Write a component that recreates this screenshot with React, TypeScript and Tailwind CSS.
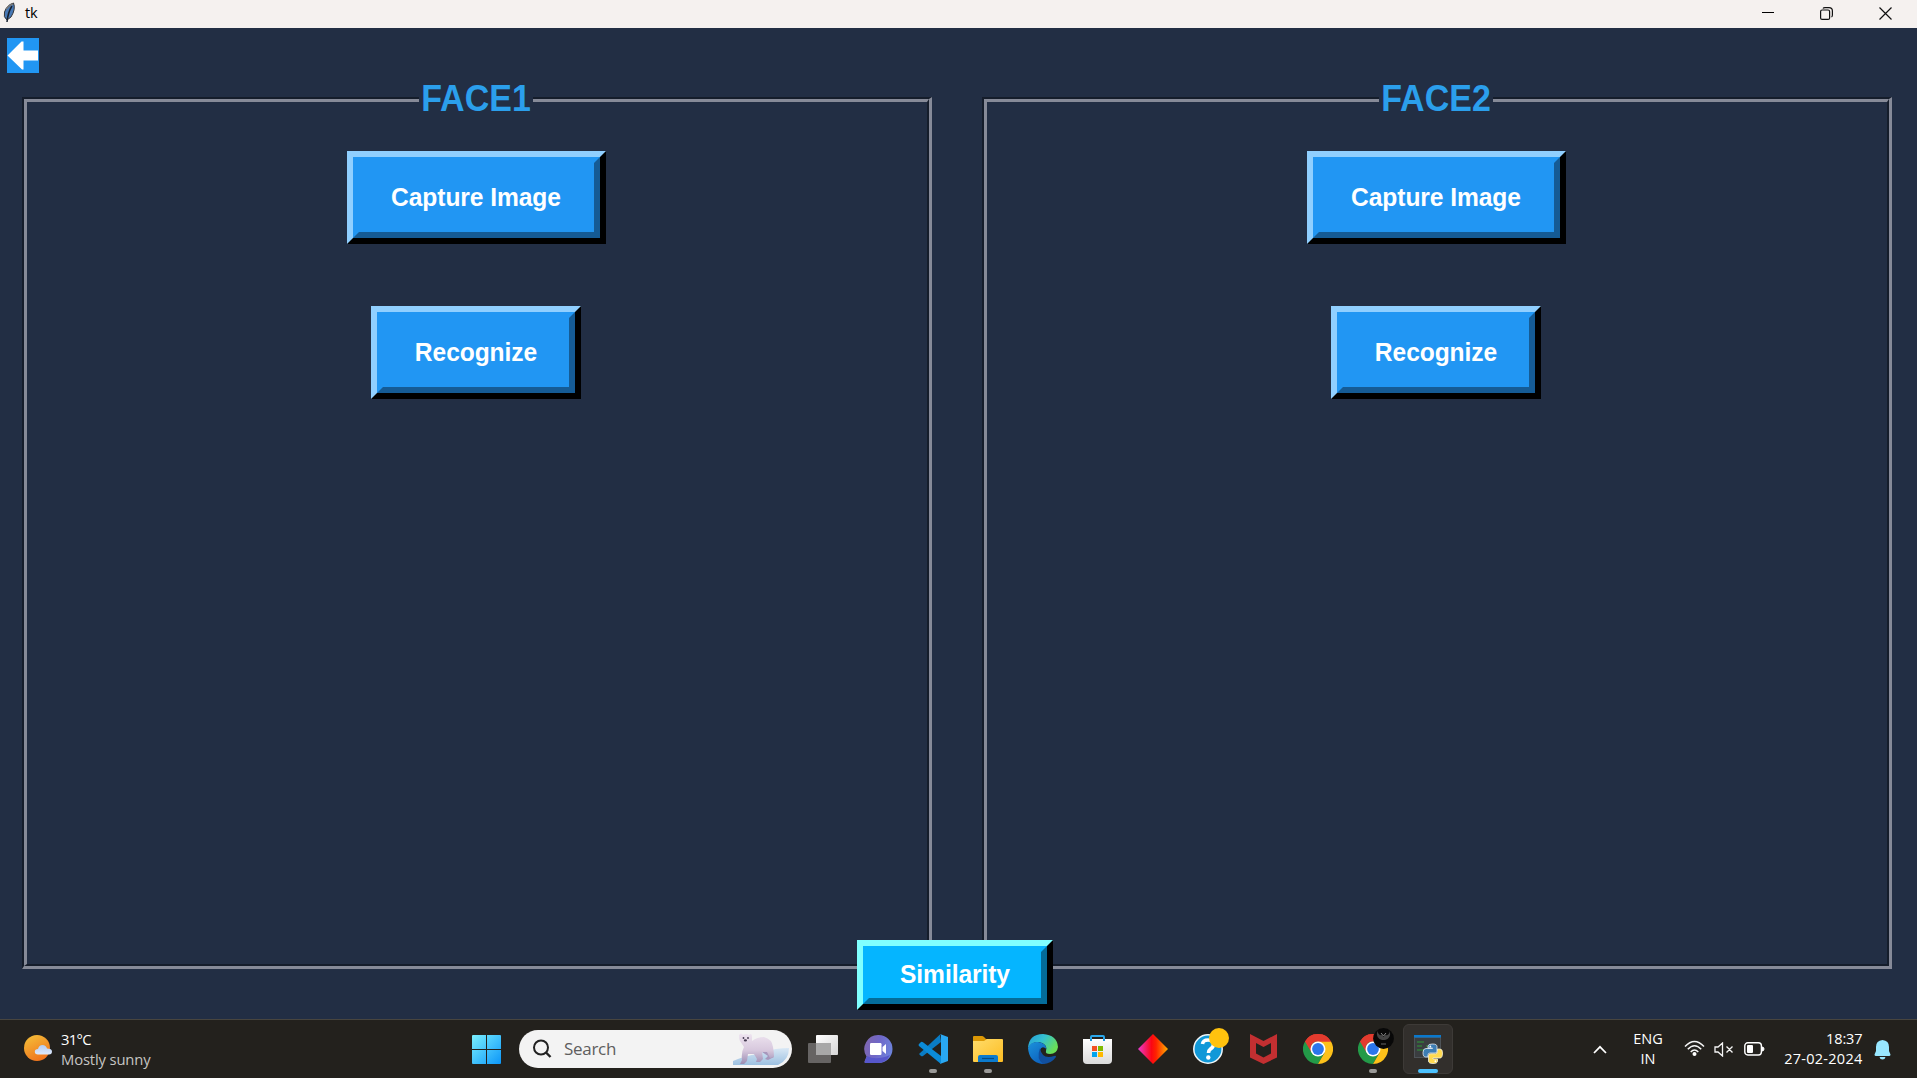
import React from "react";

const labelFont = "font-['Liberation_Sans',Arial,sans-serif]";

function TkButton({ label, className, cyan = false }: { label: string; className: string; cyan?: boolean }) {
  const outer = cyan ? "border-t-[#80ffff] border-l-[#80ffff]" : "border-t-[#90cfff] border-l-[#90cfff]";
  const inner = cyan
    ? "bg-[#05b5ff] border-t-[#05b5ff] border-l-[#05b5ff] border-r-[#046c99] border-b-[#046c99]"
    : "bg-[#2196f3] border-t-[#2196f3] border-l-[#2196f3] border-r-[#155b95] border-b-[#155b95]";
  return (
    <button className={`block border-6 border-r-black border-b-black ${outer} ${className}`}>
      <span className={`flex h-full w-full items-center justify-center whitespace-nowrap border-6 text-[24.6px] leading-7 font-bold text-white ${inner}`}>
        <span className="scale-y-106 tracking-[-0.08px]">{label}</span>
      </span>
    </button>
  );
}

function FacePanel({ title }: { title: string }) {
  return (
    <section className="relative h-[872px] w-[910px] border-t-2 border-r-3 border-b-3 border-l-2 border-t-[#151d2b] border-r-[#868a98] border-b-[#868a98] border-l-[#151d2b]">
      <div className="flex h-full flex-col items-center border-t-3 border-r-2 border-b-2 border-l-3 border-t-[#868a98] border-r-[#151d2b] border-b-[#151d2b] border-l-[#868a98] pr-[2px]">
        <TkButton label="Capture Image" className="mt-[49px] h-[93px] w-[259px]" />
        <TkButton label="Recognize" className="mt-[62px] h-[93px] w-[210px]" />
      </div>
      <h2 className="absolute -top-[19px] left-[395px] flex h-9 w-[114px] items-center justify-center bg-[#222e44] text-[34px] leading-9 font-bold text-[#2b9fec]">
        <span className="scale-y-106">{title}</span>
      </h2>
    </section>
  );
}

function TaskItem({ children, running = false, active = false }: { children: React.ReactNode; running?: boolean; active?: boolean }) {
  return (
    <div className="relative flex h-[58px] w-[55px] shrink-0 items-center justify-center">
      {active && <div className="absolute top-1 left-[2.5px] h-[50px] w-[50px] rounded-md border border-[#3d3a37] bg-[#322f2c]" />}
      <div className="relative">{children}</div>
      {running && <div className="absolute top-[49px] left-[23.5px] h-1 w-2 rounded-full bg-[#9b9a98]" />}
      {active && <div className="absolute top-[49px] left-[17.5px] h-1 w-5 rounded-full bg-[#4cc2ff]" />}
    </div>
  );
}

function Chrome() {
  return (
    <svg width="30" height="30" viewBox="0 0 30 30">
      <path d="M15 15 L2 7.5 A15 15 0 0 1 28 7.5 Z" fill="#e33b2e" />
      <path d="M2 7.5 A15 15 0 0 0 15 30 L21.5 18.7 L15 15 Z" fill="#239a48" />
      <path d="M28 7.5 H15 L21.5 18.8 L15 30 A15 15 0 0 0 28 7.5Z" fill="#fdc11a" />
      <path d="M2 7.5 L8.5 18.7 L15 15 L15 7.5Z" fill="#239a48" />
      <path d="M2 7.5 A15 15 0 0 1 28 7.5 H15 A7.5 7.5 0 0 0 8 12.5 L8.2 18Z" fill="#e33b2e" />
      <circle cx="15" cy="15" r="7.5" fill="#fff" />
      <circle cx="15" cy="15" r="5.9" fill="#2b76ec" />
    </svg>
  );
}

function Bear() {
  return (
    <svg width="58" height="34" viewBox="0 0 58 34">
      <defs>
        <linearGradient id="ice" x1="0" y1="0" x2="0" y2="1"><stop stopColor="#d9e8f5" /><stop offset="1" stopColor="#9dc0e0" /></linearGradient>
        <linearGradient id="fur" x1="0" y1="0" x2="0" y2="1"><stop stopColor="#eee4f0" /><stop offset=".55" stopColor="#d7c8dd" /><stop offset="1" stopColor="#9b8cb2" /></linearGradient>
      </defs>
      <path d="M1 29 Q12 24 25 22 Q42 16 57 16 Q57 28 46 33 H1Z" fill="url(#ice)" />
      <path d="M30 20 L39 19 L42 25 L36 28 L33 27 L36 24Z" fill="#a797bc" />
      <path d="M7 3 Q9 0 11 3 Q14 1 17 3 Q20 0 20 5 Q20 8 20 9 Q25 5 32 5 Q40 7 41 15 Q42 20 42 25 L38 26 L35 20 L30 20 L31 27 L28 30 H24 L25 27 L22 22 H16 L15 29 L12 32 H8 L10 28 Q9 20 12 15 L8 9 Q7 7 7 3Z" fill="url(#fur)" />
      <circle cx="11.5" cy="6" r=".9" fill="#443a50" /><circle cx="16" cy="6" r=".9" fill="#443a50" />
      <ellipse cx="13.4" cy="8.4" rx="1.6" ry="1.1" fill="#443a50" />
    </svg>
  );
}

function Taskbar() {
  return (
    <footer className="flex h-[59px] items-start border-t border-[#48453f] bg-[#23211d] font-['Open_Sans','Noto_Sans',sans-serif] text-white">
      <div className="flex w-[459px] items-start pl-6">
        <svg className="mt-[14px]" width="29" height="28" viewBox="0 0 29 28">
          <defs>
            <linearGradient id="sun" x1=".2" y1="0" x2=".7" y2="1"><stop stopColor="#f4bd38" /><stop offset="1" stopColor="#f0701b" /></linearGradient>
            <linearGradient id="cloud" x1="0" y1="0" x2="0" y2="1"><stop stopColor="#b4cdf3" /><stop offset="1" stopColor="#dde8fb" /></linearGradient>
          </defs>
          <circle cx="13" cy="14" r="13" fill="url(#sun)" />
          <path d="M14 20.500 a3.200 2.700 0 0 1 0-5.400 q1-4 4.500-4 q3.500 0 4.500 3.500 q5 0 5 3 q0 2.900-3 2.900Z" fill="url(#cloud)" />
        </svg>
        <div className="mt-[9px] ml-2 text-[14.8px] leading-5 whitespace-nowrap">
          <div className="tracking-[-0.7px]">31°C</div>
          <div className="tracking-[-0.15px] text-[#c6c5c3]">Mostly sunny</div>
        </div>
      </div>
      <TaskItem>
        <svg width="29" height="29" viewBox="0 0 29 29">
          <defs><linearGradient id="win" x1="0" y1="0" x2="29" y2="29" gradientUnits="userSpaceOnUse"><stop stopColor="#7af0ff" /><stop offset="1" stopColor="#0c96f8" /></linearGradient></defs>
          <path d="M1 0H14V14H0V1Q0 0 1 0ZM15 0H28Q29 0 29 1V14H15ZM0 15H14V29H1Q0 29 0 28ZM15 15H29V28Q29 29 28 29H15Z" fill="url(#win)" />
        </svg>
      </TaskItem>
      <div className="mt-[10px] mr-[3.5px] ml-[5px] flex h-[38px] w-[273px] items-center overflow-hidden rounded-full bg-[#f3f3f3] pl-[13px]">
        <svg width="20" height="20" viewBox="0 0 20 20" fill="none" stroke="#222" strokeWidth="2"><circle cx="9" cy="8.5" r="7" /><path d="M14 13.5 L18.5 18" strokeWidth="2.4" /></svg>
        <span className="ml-3 w-[168px] text-[17px] tracking-[-0.3px] text-[#5e5e5e]">Search</span>
        <Bear />
      </div>
      <TaskItem>
        <svg width="30" height="28" viewBox="0 0 30 28">
          <defs><linearGradient id="tv" x1="0" y1="0" x2="1" y2="1"><stop stopColor="#fff" /><stop offset="1" stopColor="#d6d6d6" /></linearGradient></defs>
          <rect x="8" width="22" height="20" rx="1" fill="url(#tv)" />
          <rect y="8" width="23" height="20" rx="1" fill="#666463" />
          <rect x="8" y="8" width="15" height="12" fill="#a8a8a8" />
        </svg>
      </TaskItem>
      <TaskItem>
        <svg width="29" height="29" viewBox="0 0 29 29">
          <defs><linearGradient id="chat" x1="0" y1=".2" x2="1" y2=".5"><stop stopColor="#8067ae" /><stop offset=".5" stopColor="#6f67c8" /><stop offset="1" stopColor="#6d83dc" /></linearGradient></defs>
          <path d="M14.5 0A14 14 0 1 1 14.5 28H2Q0 28 .5 26.5L2.5 21.5A14 14 0 0 1 14.5 0Z" fill="url(#chat)" />
          <path d="M1 26L3 21Q12 26 26 20Q22 28 14 28H2Q0 28 1 26Z" fill="#5757cb" />
          <rect x="6" y="8" width="11.5" height="12" rx="1.2" fill="#fff" /><path d="M18.500 12L22 9V19L18.500 16Z" fill="#fff" />
        </svg>
      </TaskItem>
      <TaskItem running>
        <svg width="30" height="30" viewBox="0 0 30 30">
          <path d="M1 20L22 .5L23 8L5 22Q4 22.5 3 22L1 20Z" fill="#0a7cc4" />
          <path d="M1 10L3 8Q4 7.5 5 8.2L23 22V30L1 12Q0 11 1 10Z" fill="#0b8bd8" />
          <path d="M22 0L30 3V27L22 30Q23 29 23 28V2Q23 1 22 0Z" fill="#29a8f2" />
        </svg>
      </TaskItem>
      <TaskItem running>
        <svg width="30" height="28" viewBox="0 0 30 28">
          <defs><linearGradient id="folder" x1="0" y1="0" x2="1" y2="1"><stop stopColor="#ffdc6b" /><stop offset="1" stopColor="#fdbd22" /></linearGradient></defs>
          <path d="M0 2Q0 1 1 1H9Q10 1 11 2L13 4H28V10H0Z" fill="#dc9805" />
          <path d="M0 6H11L14 4H29Q30 4 30 5V26Q30 27 29 27H1Q0 27 0 26Z" fill="url(#folder)" />
          <path d="M5 27V22Q5 20 7 20H23Q25 20 25 22V27Z" fill="#0c7bcd" /><path d="M9 23.5H21" stroke="#074b82" strokeWidth="1.2" />
        </svg>
      </TaskItem>
      <TaskItem>
        <svg width="30" height="30" viewBox="0 0 30 30">
          <defs>
            <linearGradient id="edgeTop" x1="0" y1="0" x2="1" y2=".5"><stop stopColor="#249dd8" /><stop offset=".5" stopColor="#35c1d0" /><stop offset="1" stopColor="#69df57" /></linearGradient>
            <linearGradient id="edgeSide" x1="0" y1="0" x2=".7" y2="1"><stop stopColor="#1b92dc" /><stop offset="1" stopColor="#0c5ebb" /></linearGradient>
          </defs>
          <path d="M0 14Q1 0 15 0Q29 1 30 13Q29 20 22 20Q17 20 18 17Q20 10 11 8Q4 7 0 14Z" fill="url(#edgeTop)" />
          <path d="M0 14Q3 7 10 8Q18 9 18.5 15Q14 11 12 16Q11 25 21 26Q18 30 14 30Q1 28 0 14Z" fill="url(#edgeSide)" />
          <path d="M12 14Q8 25 15 30Q23 30 28 23Q28 21 26 22Q14 26 12 14Z" fill="#114f9e" />
        </svg>
      </TaskItem>
      <TaskItem>
        <svg width="29" height="29" viewBox="0 0 29 29" className="mr-px">
          <defs><linearGradient id="store" x1="0" y1="0" x2="0" y2="1"><stop stopColor="#fff" /><stop offset="1" stopColor="#dadada" /></linearGradient></defs>
          <path d="M8 6V2Q8 1 9 1H20Q21 1 21 2V6" fill="none" stroke="#2aa8ec" strokeWidth="2" />
          <path d="M0 4H29V25Q29 29 25 29H4Q0 29 0 25Z" fill="url(#store)" />
          <path d="M8 6V4M21 6V4" stroke="#1b95dc" strokeWidth="2" />
          <rect x="9" y="11" width="5" height="5" fill="#f25022" /><rect x="15" y="11" width="5" height="5" fill="#7fba00" /><rect x="9" y="17" width="5" height="5" fill="#00a4ef" /><rect x="15" y="17" width="5" height="5" fill="#ffb900" />
        </svg>
      </TaskItem>
      <TaskItem>
        <svg width="30" height="30" viewBox="0 0 30 30">
          <defs><linearGradient id="gem"><stop stopColor="#e83bd0" /><stop offset=".45" stopColor="#fb0714" /><stop offset=".6" stopColor="#fe2200" /><stop offset="1" stopColor="#ffb000" /></linearGradient></defs>
          <path d="M15 0L30 15L15 30L0 15Z" fill="url(#gem)" />
        </svg>
      </TaskItem>
      <TaskItem>
        <svg width="30" height="30" viewBox="0 0 30 30" className="overflow-visible">
          <circle cx="15" cy="15" r="14.2" fill="#1098d8" stroke="#f0f6f8" strokeWidth="1.5" />
          <path d="M9.5 10Q10 6 15 6Q20.500 6 20.500 10.500Q20.500 13 17.500 15Q15.500 16.500 15.500 19" fill="none" stroke="#fff" strokeWidth="3.6" /><circle cx="15.300" cy="23.500" r="2.200" fill="#fff" />
          <circle cx="26" cy="4" r="10" fill="#ffc20e" />
        </svg>
      </TaskItem>
      <TaskItem>
        <svg width="27" height="30" viewBox="0 0 27 30"><path d="M0 0L13.500 7L27 0V23.500L13.500 30L0 23.500ZM6 9V19.500L13.500 23.500L21 19.500V9L13.500 13Z" fill="#c32f31" fillRule="evenodd" /></svg>
      </TaskItem>
      <TaskItem><Chrome /></TaskItem>
      <TaskItem running>
        <Chrome />
        <svg className="absolute -top-[6px] left-[15px]" width="21" height="21" viewBox="0 0 21 21">
          <circle cx="10.500" cy="10.500" r="10.400" fill="#080808" />
          <path d="M4 3Q6 8 9 7L10.500 9L12 7Q16 8 17 3Q18 11 12 12H9Q3 11 4 3Z" fill="#444" /><path d="M8 5L10.500 8L13 5" fill="none" stroke="#888" /><path d="M8 16H13" stroke="#666" />
        </svg>
      </TaskItem>
      <TaskItem active>
        <svg width="30" height="30" viewBox="0 0 30 30">
          <rect x="1" y="2" width="27" height="22" fill="#4e5358" /><rect x="2" y="4" width="25" height="19" fill="#3a3d40" /><rect x="1" y="1" width="27" height="2.500" fill="#0a78cc" />
          <path d="M4 8H11M4 12H9M4 16H11M13 12H15" stroke="#2e9a37" strokeWidth="1.200" />
          <path d="M15 14V12Q15 10 19.500 10Q24 10 24 12.500V17Q24 19 22 19H17Q15 19 15 21V23H12.500Q10 23 10 18.500Q10 14.500 13 14.500H19.500V14Z" fill="#3d7db4" stroke="#e8eef2" strokeWidth=".8" />
          <path d="M24.500 15H27Q29.500 15 29.500 19Q29.500 24 27 24H20V25H24.500V27Q24.500 29.500 20 29.500Q15.500 29.500 15.500 27V22Q15.500 19.800 17.500 19.800H22.500Q24.500 19.500 24.500 17.500Z" fill="#ffd94f" stroke="#f5f1dd" strokeWidth=".8" />
          <circle cx="17.300" cy="12.500" r=".9" fill="#fff" /><circle cx="22.400" cy="27.200" r=".9" fill="#fff" />
        </svg>
      </TaskItem>
      <div className="flex flex-1 items-start text-[14.5px] leading-5 whitespace-nowrap">
        <svg className="mt-[25px] ml-[137px]" width="14" height="9" viewBox="0 0 14 9" fill="none" stroke="#fff" strokeWidth="1.700"><path d="M1 8L7 1.800L13 8" /></svg>
        <div className="mt-[9px] ml-[22px] w-[39px] text-center tracking-[-0.05px]">ENG<br />IN</div>
        <svg className="mt-[20px] ml-[16px]" width="21" height="17" viewBox="0 0 21 17" fill="none" stroke="#f5f5f5" strokeWidth="1.500">
          <path d="M1 6.500Q10.500-3.500 20 6.500M3.800 9.300Q10.500 2 17.200 9.300M6.700 12Q10.500 8 14.300 12" /><circle cx="10.500" cy="14" r="2" fill="#fff" stroke="none" />
        </svg>
        <svg className="mt-[22px] ml-[9px]" width="20" height="15" viewBox="0 0 20 15" fill="none" stroke="#f5f5f5" strokeWidth="1.300"><path d="M1 5H4L8.500 1V14L4 10H1ZM12.500 4.500L18.500 10.500M18.500 4.500L12.500 10.500" /></svg>
        <svg className="mt-[22px] ml-[10px]" width="21" height="14" viewBox="0 0 21 14"><rect x=".8" y=".8" width="16.600" height="12.200" rx="3" fill="none" stroke="#fff" strokeWidth="1.400" /><rect x="3" y="3" width="6" height="8" rx="1" fill="#fff" /><path d="M18 5Q20 5 20 7Q20 9 18 9Z" fill="#fff" stroke="#fff" /></svg>
        <div className="mt-[9px] ml-5 flex w-[78px] flex-col items-end"><div className="tracking-[-0.1px]">18:37</div><div className="tracking-[0.27px]">27-02-2024</div></div>
        <svg className="mt-[20px] ml-[11px]" width="17" height="20" viewBox="0 0 17 20" fill="#98e7ff"><path d="M8.500 0Q15 .5 15 7V11L16.500 14.500Q16.500 16 15 16H2Q.5 16 .5 14.500L2 11V7Q2 .5 8.500 0ZM5.500 17H11.500Q11 19.500 8.500 19.500Q6 19.500 5.500 17Z" /></svg>
      </div>
    </footer>
  );
}

export default function App() {
  return (
    <div className={`flex h-[1078px] w-[1917px] flex-col overflow-hidden bg-[#222e44] ${labelFont}`}>
      <header className="flex h-7 shrink-0 items-center bg-[#f5f1ef] pb-[2px] text-black">
        <svg className="ml-[3px]" width="13" height="22" viewBox="0 0 13 22"><path d="M10.500 1Q13 7 8 15L4 18Q0 15 1.500 10Q4 3 10.500 1Z" fill="#4778b5" stroke="#353639" strokeWidth="1" /><path d="M9 4Q5 10 4 20" fill="none" stroke="#17202f" strokeWidth="1.500" /><path d="M3 7Q6 3 10 2" fill="none" stroke="#777" strokeWidth="1.500" /></svg>
        <span className="ml-[9px] flex-1 font-['Open_Sans',sans-serif] text-[14.5px] leading-5 tracking-[-0.2px]">tk</span>
        <svg className="mr-[46px]" width="12" height="12" viewBox="0 0 12 12"><path d="M0 5.500H12" stroke="#000" /></svg>
        <svg className="mr-[46px]" width="13" height="13" viewBox="0 0 13 13" fill="none" stroke="#111" strokeWidth="1.200"><rect x=".6" y="3" width="9" height="9.400" rx="1.500" /><path d="M3 1.500Q3.500.6 5 .6H9Q12.400.6 12.400 4V8Q12.400 9.500 11.500 10" /></svg>
        <svg className="mr-[25px]" width="13" height="13" viewBox="0 0 13 13" stroke="#111" strokeWidth="1.200"><path d="M.5.500L12.500 12.500M12.500.500L.5 12.500" /></svg>
      </header>
      <main className="relative h-[991px] shrink-0">
        <button className="mt-[10px] ml-[7px] block h-[35px] w-[31.5px] bg-[#2196f3]">
          <svg width="31" height="35" viewBox="0 0 31 35"><path d="M.5 17.500L14.500 3.500H16.500V12.500H31V22.500H16.500V31.500H15Z" fill="#fff" /></svg>
        </button>
        <div className="mt-6 ml-[22px] flex gap-[50px]">
          <FacePanel title="FACE1" />
          <FacePanel title="FACE2" />
        </div>
        <div className="absolute top-[912px] left-[857px]"><TkButton label="Similarity" cyan className="h-[70px] w-[196px]" /></div>
      </main>
      <Taskbar />
    </div>
  );
}
